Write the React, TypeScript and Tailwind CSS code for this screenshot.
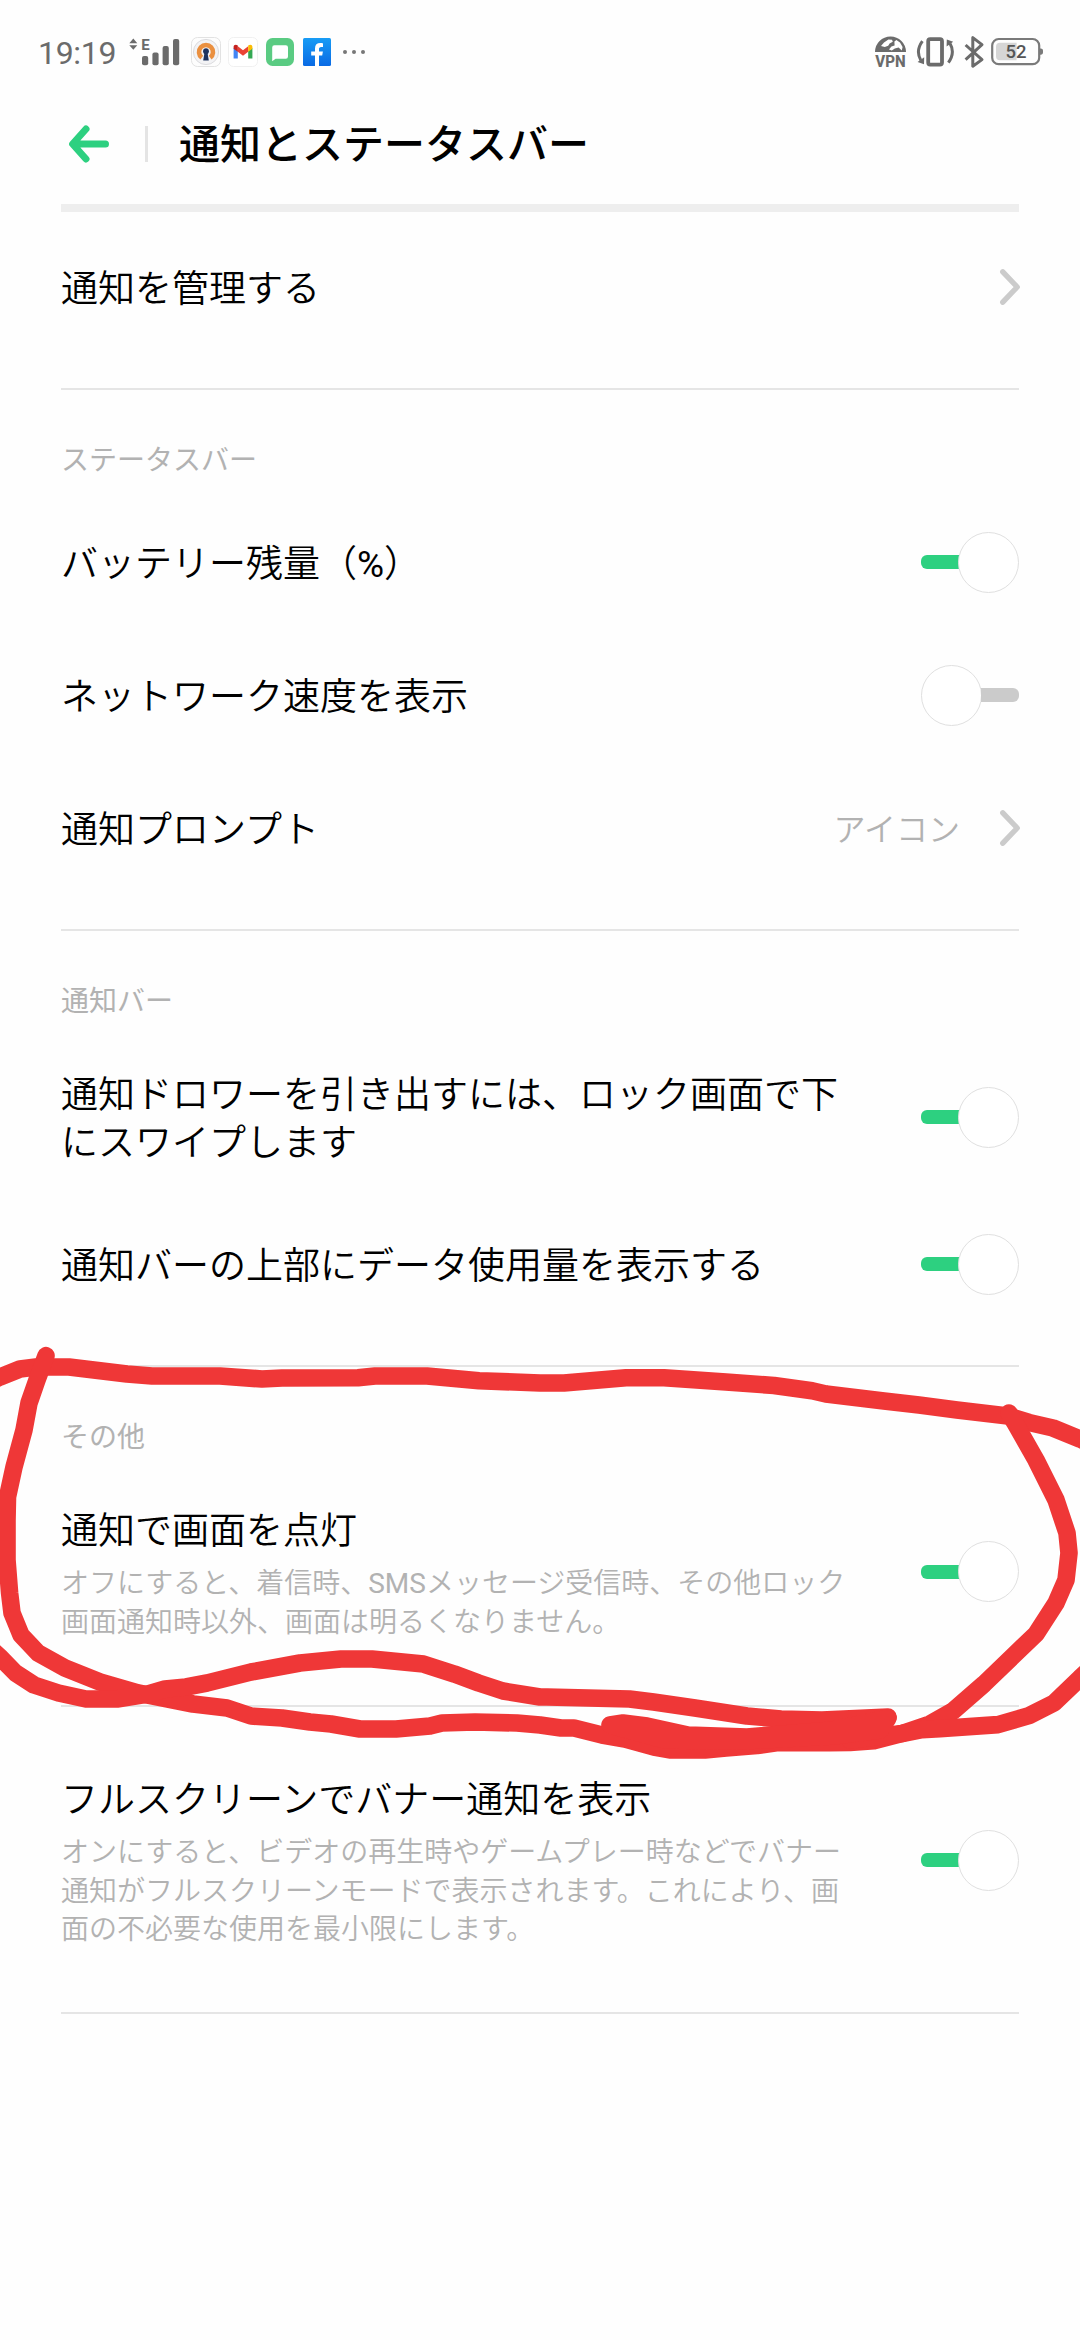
import type { ReactNode } from "react";

const SignalIcon = () => (
	<svg width="52" height="32" viewBox="128 36 52 32" fill="#6b6b6b" className="overflow-visible">
		<path d="M133.3 38.6l4 4.6h-8zM133.3 49.8l4-4.6h-8z" />
		<text x="141.2" y="50.3" fontSize="15" fontWeight="700" fontFamily="Roboto">
			E
		</text>
		<rect x="142" y="56" width="6.2" height="9.2" rx="2" />
		<rect x="152.4" y="52.6" width="6.2" height="12.6" rx="2" />
		<rect x="162.6" y="46" width="6.2" height="19.2" rx="2" />
		<rect x="173" y="39" width="6.2" height="26.2" rx="2" />
	</svg>
);

const OpenVpnIcon = () => (
	<svg width="30" height="30" viewBox="0 0 30 30">
		<rect x="0.5" y="0.5" width="29" height="29" rx="6" fill="#fdfdfd" stroke="#e2e2e2" />
		<circle cx="15" cy="15" r="12.6" fill="#f3f3f5" stroke="#dcdcdf" />
		<path
			d="M10.8 20.6a7 7 0 1 1 8.4 0"
			fill="none"
			stroke="#ea9040"
			strokeWidth="4.6"
		/>
		<circle cx="15" cy="14.2" r="2.9" fill="#1d335f" />
		<path d="M13.6 15h2.8l1.4 8.4h-5.6z" fill="#1d335f" />
	</svg>
);

const GmailIcon = () => (
	<svg width="30" height="30" viewBox="0 0 30 30">
		<rect x="0.5" y="0.5" width="29" height="29" rx="5" fill="#fff" stroke="#f0f0f0" />
		<path d="M5.6 11v10.6h4.2V14z" fill="#4285f4" />
		<path d="M24.4 11v10.6h-4.2V14z" fill="#34a853" />
		<path d="M9.8 9.3l5.2 4 5.2-4v5.5l-5.2 4-5.2-4z" fill="#ea4335" />
		<path d="M5.6 11.7V10c0-2.2 2.3-3 4.2-1.4v6.2z" fill="#c5221f" />
		<path d="M24.4 11.7V10c0-2.2-2.3-3-4.2-1.4v6.2z" fill="#fbbc04" />
	</svg>
);

const MessageIcon = () => (
	<svg width="28" height="28" viewBox="0 0 28 28">
		<rect width="28" height="28" rx="6.5" fill="#5acb82" />
		<path
			d="M8.4 7.2h11.4a2.2 2.2 0 0 1 2.2 2.2v9.2a2.2 2.2 0 0 1-2.2 2.2H9.6l-3.4 2.4V9.4a2.2 2.2 0 0 1 2.2-2.2z"
			fill="#fff"
		/>
	</svg>
);

const FacebookIcon = () => (
	<svg width="28" height="28" viewBox="0 0 28 28">
		<defs>
			<linearGradient id="fb" x1="0" y1="0" x2="0" y2="1">
				<stop offset="0" stopColor="#189cf5" />
				<stop offset="1" stopColor="#0a6ae4" />
			</linearGradient>
		</defs>
		<rect width="28" height="28" rx="1.5" fill="url(#fb)" />
		<path
			d="M12 28V17.6H8.2v-4.2H12v-2.9c0-3.6 2-5.4 5.2-5.4 1.2 0 2.4.2 2.8.3v3.7h-1.9c-1.6 0-2.1 1-2.1 2v2.3h3.9l-.7 4.2H16V28z"
			fill="#fff"
		/>
	</svg>
);

const VpnIcon = () => (
	<svg width="34" height="32" viewBox="873 36 34 32" fill="#6b6b6b" className="overflow-visible">
		<path d="M874 52a15.5 15.5 0 0 1 31 0z" />
		<path
			d="M880 46l3-3.6 4.4-2.8 3.6.2.8 2-3.2 1.6-1.4 2.4-3.4 1.2zM893.4 41.6l2-1.6 3.6 2.6 2.6 4.4-.8 3.4-3.2-2.8-3.8.8-3 2-2.8-.8 2.4-3.2 3.2-1z"
			fill="#fff"
		/>
		<text
			x="874.2"
			y="66.8"
			fontSize="16"
			fontWeight="800"
			fontFamily="Roboto"
			textLength="30.4"
			lengthAdjust="spacingAndGlyphs"
		>
			VPN
		</text>
	</svg>
);

const VibrateIcon = () => (
	<svg width="38" height="32" viewBox="915 36 38 32" fill="none" stroke="#6b6b6b">
		<rect x="927.2" y="39.2" width="13.8" height="25.4" rx="2" strokeWidth="3.8" />
		<path d="M921.4 41.2c-4.6 6.4-4.8 13.6-1.6 19M947.4 62.6c4.6-6.4 4.8-13.6 1.6-19" strokeWidth="3" />
		<path d="M916.6 62l6.4 2.2.2-7zM952.2 41.8l-6.4-2.2-.2 7z" fill="#6b6b6b" stroke="none" />
	</svg>
);

const BluetoothIcon = () => (
	<svg width="22" height="34" viewBox="962 35 22 34" fill="none" stroke="#6b6b6b" strokeWidth="3">
		<path d="M964.6 45l16.4 14.6-9.2 6.6V37.6l9.2 7L964.6 59.6" strokeLinejoin="round" />
	</svg>
);

const BatteryIcon = () => (
	<svg width="52" height="30" viewBox="990 37 52 30">
		<rect x="991.2" y="39" width="47" height="25.2" rx="6.5" fill="none" stroke="#7a7a7a" strokeWidth="2.2" />
		<path d="M1039 48.4c2.8 0 3 1.2 3 3.2s-.2 3.2-3 3.2z" fill="#7a7a7a" />
		<path d="M999 42.8h16.6v17.4H999a4 4 0 0 1-4-4v-9.4a4 4 0 0 1 4-4z" fill="#d6d6d6" />
		<text x="1004.4" y="58.2" fontSize="18.5" fontWeight="500" fontFamily="Roboto" fill="#555">
			52
		</text>
	</svg>
);

const StatusBar = () => (
	<div className="flex h-[104px] items-center pl-[38px] pr-[37px]">
		<span className="w-[90px] pt-px font-[Roboto] text-[32px] font-[450] tracking-[-0.3px] text-[#6b6b6b]">
			19:19
		</span>
		<SignalIcon />
		<div className="ml-[11px] flex items-center gap-[7px]">
			<OpenVpnIcon />
			<GmailIcon />
			<div className="flex items-center gap-[9px] pl-px">
				<MessageIcon />
				<FacebookIcon />
			</div>
		</div>
		<div className="ml-[12px] flex gap-[5px]">
			<span className="size-[4px] rounded-full bg-[#777]" />
			<span className="size-[4px] rounded-full bg-[#777]" />
			<span className="size-[4px] rounded-full bg-[#777]" />
		</div>
		<div className="ml-auto flex items-center">
			<VpnIcon />
			<div className="ml-[8px] mr-[9px]">
				<VibrateIcon />
			</div>
			<BluetoothIcon />
			<div className="ml-[6px]">
				<BatteryIcon />
			</div>
		</div>
	</div>
);

const Chevron = () => (
	<svg width="22" height="38" viewBox="0 0 22 38" className="-mr-[2px] mb-px shrink-0">
		<path
			d="M3.8 3.8L18.2 19 3.8 34.2"
			fill="none"
			stroke="#cbcbcb"
			strokeWidth="5.4"
			strokeLinecap="round"
			strokeLinejoin="round"
		/>
	</svg>
);

const Toggle = ({ on }: { on: boolean }) => (
	<div className={`mb-px flex w-[98px] shrink-0 items-center ${on ? "" : "flex-row-reverse"}`}>
		<span className={`h-[14px] flex-1 ${on ? "rounded-l-[6px] bg-[#2dd080]" : "rounded-r-[6px] bg-[#cbcbcb]"}`} />
		<span
			className={`size-[61px] rounded-full border-[1.5px] border-[#e0e0e0] bg-white ${on ? "-ml-px" : "-mr-px"}`}
		/>
	</div>
);

interface RowProps {
	title: ReactNode;
	desc?: ReactNode;
	height?: string;
	children: ReactNode;
}

const Row = ({ title, desc, height = "h-[133px]", children }: RowProps) => (
	<div className={`flex items-center justify-between ${height}`}>
		<div className={`w-[790px] ${desc ? "pt-[6px]" : "pt-[4px]"}`}>
			<p className="text-[37px] font-[350] leading-[48px] text-black">{title}</p>
			{desc && <p className="mt-[9px] text-[28px] font-[350] leading-[38.8px] text-[#b2b2b2]">{desc}</p>}
		</div>
		<div className="flex shrink-0 items-center">{children}</div>
	</div>
);

const Section = ({ label, children }: { label?: string; children: ReactNode }) => (
	<section className="border-b-2 border-[#e5e5e5] pb-[34px]">
		{label && <h2 className="h-[106px] pt-[51px] text-[28px] leading-[40px] text-[#b2b2b2]">{label}</h2>}
		{children}
	</section>
);

// hand drawn marker strokes around the "その他" section
const strokes = [
	"-8,1381 0,1377 20,1369 36,1367 69,1367 127,1374 152,1376 220,1376 262,1379 282,1378 358,1377.7 375,1376 427,1376 479,1380.7 540,1383 564,1383 626,1377.7 664,1377.7 726,1382 774,1385.5 812,1390.7 826,1394 884,1401 919,1405 957,1410 1008,1416 1029,1422.5 1053,1428 1080,1439 1092,1445",
	"46,1355.7 37,1380 29,1403 24,1430 14,1467 7.5,1497 7,1520 7,1560 9.6,1593 12,1613 21,1635 38,1653 65,1668 100,1682 138,1693 193,1704 227,1708 251,1716 282,1718 310,1722 331,1724 360,1729 396,1729 430,1726 442,1723 475,1722 517,1723 540,1725 561,1728 574,1728 602,1735 625,1739 654,1747 671,1750 705,1750 726,1748 757,1745.6 778,1742.6 829,1742.6 850,1742.4 874,1740.6 902,1733.5 930,1724 953,1711 984,1684 1012,1657 1036,1634 1056,1603 1066,1580 1069,1553 1067,1533 1056,1500 1036,1460 1015,1423 1009,1413",
	"850,1740 902,1733.5 922,1729.6 940,1728.6 998,1724.6 1029,1715.6 1054,1703 1080,1678 1092,1667",
	"-8,1650 0,1657 15.5,1673 34,1685 58.5,1693 86,1699 117,1699 148,1694 165,1689 186,1687 207,1683 251,1672 300,1663 341,1659 372,1659 423.5,1664 454.5,1674 478.6,1683 503,1691 540,1697 547,1697 629.5,1699 653.6,1702 695,1708 747,1716 781,1719 822,1720 888,1717",
	"610,1725 623,1723 647,1726 688,1735 747,1737 833,1730 888,1718 880,1730 833,1736 740,1741 665,1740 610,1725",
];

const Marker = () => (
	<svg
		className="pointer-events-none absolute left-0 top-0"
		width="1080"
		height="2340"
		fill="none"
		stroke="#ef3737"
		strokeWidth="17.6"
		strokeLinecap="round"
		strokeLinejoin="round"
	>
		{strokes.map((points) => (
			<polyline key={points} points={points} />
		))}
	</svg>
);

const App = () => {
	return (
		<div
			lang="ja"
			className="relative h-[2340px] w-[1080px] overflow-hidden bg-[#fefefe] font-[Roboto,'Noto_Sans_CJK_JP',sans-serif]"
		>
			<StatusBar />

			<header className="flex h-[100px] items-center pb-[20px] pl-[68px]">
				<svg width="42" height="38" viewBox="0 0 42 38" fill="none" stroke="#2dd080" strokeWidth="7">
					<path d="M18 4L4.6 19 18 34M5 19h32.5" strokeLinecap="round" strokeLinejoin="round" />
				</svg>
				<span className="ml-[35px] h-[36px] w-[3px] bg-[#e4e4e4]" />
				<h1 className="ml-[31px] pt-[2px] text-[41px] font-medium leading-[60px] text-black">
					通知とステータスバー
				</h1>
			</header>

			<main className="mx-[61px] border-t-8 border-[#eeeeee] pt-[9px]">
				<Section>
					<Row title="通知を管理する">
						<Chevron />
					</Row>
				</Section>

				<Section label="ステータスバー">
					<Row
						title={
							<>
								バッテリー残量（<span className="font-normal">%</span>）
							</>
						}
					>
						<Toggle on />
					</Row>
					<Row title="ネットワーク速度を表示">
						<Toggle on={false} />
					</Row>
					<Row title="通知プロンプト">
						<span className="mr-[39px] pt-[3px] text-[32px] font-[350] text-[#b2b2b2]">アイコン</span>
						<Chevron />
					</Row>
				</Section>

				<Section label="通知バー">
					<Row title="通知ドロワーを引き出すには、ロック画面で下にスワイプします" height="h-[161px]">
						<Toggle on />
					</Row>
					<Row title="通知バーの上部にデータ使用量を表示する">
						<Toggle on />
					</Row>
				</Section>

				<Section label="その他">
					<Row
						title="通知で画面を点灯"
						desc={
							<>
								オフにすると、着信時、<span className="font-normal">SMS</span>
								メッセージ受信時、その他ロック画面通知時以外、画面は明るくなりません。
							</>
						}
						height="h-[198px]"
					>
						<Toggle on />
					</Row>
				</Section>

				<div className="pt-[35px]">
					<section className="border-b-2 border-[#e5e5e5] pb-[33px]">
						<Row
							title="フルスクリーンでバナー通知を表示"
							desc="オンにすると、ビデオの再生時やゲームプレー時などでバナー通知がフルスクリーンモードで表示されます。これにより、画面の不必要な使用を最小限にします。"
							height="h-[237px]"
						>
							<Toggle on />
						</Row>
					</section>
				</div>
			</main>

			<Marker />
		</div>
	);
};

export default App;
